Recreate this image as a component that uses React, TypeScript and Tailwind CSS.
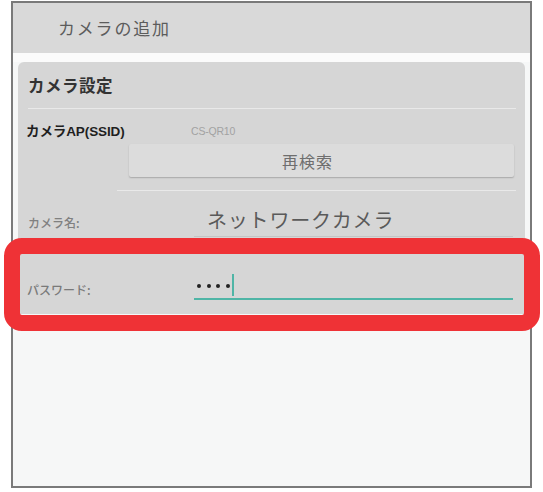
const jp = { fontFamily: '"Noto Sans CJK JP", "Noto Sans", sans-serif' }
const latin = { fontFamily: '"Liberation Sans", "Noto Sans CJK JP", sans-serif' }

export default function App() {
  return (
    <div className="relative w-[543px] h-[492px] bg-white" style={jp}>
      {/* Device frame */}
      <div className="ml-[11px] mt-[1px] w-[521px] h-[487px] border-2 border-[#7a7a7a] bg-[#f6f7f7] flex flex-col">
        {/* Action bar */}
        <div className="h-[50px] bg-[#d9d9d9] flex items-center pl-[45px]">
          <span className="text-[17px] tracking-[1.8px] text-[#5c5c5c]">カメラの追加</span>
        </div>
        <div className="h-[9px] bg-[#fbfbfb]" />

        {/* Settings card */}
        <div className="mx-[5px] h-[252px] bg-[#d6d6d6] rounded-t-[6px] flex flex-col">
          <div className="h-[46px] flex items-center pl-[10px]">
            <span className="text-[16.5px] font-bold tracking-[0.5px] text-[#333]">カメラ設定</span>
          </div>
          <div className="h-px ml-[10px] mr-[9px] bg-[#e9e9e9]" />

          <div className="mt-[13px] h-[20px] flex items-center pl-[8px]" style={latin}>
            <span className="w-[165px] text-[13.5px] font-bold text-[#1f1f1f] tracking-[-0.1px]">
              カメラAP(SSID)
            </span>
            <span className="text-[10.5px] text-[#a2a2a2] tracking-[-0.2px]">CS-QR10</span>
          </div>

          <div className="mt-[2px] ml-[111px] mr-[11px] h-[33px] bg-[#dcdcdc] rounded-[2px] shadow-[0_1px_1.5px_rgba(0,0,0,0.22)] flex items-center justify-center pr-[28px]">
            <span className="text-[16px] text-[#6e6e6e] tracking-[1px]">再検索</span>
          </div>

          <div className="mt-[13px] h-px ml-[99px] mr-[9px] bg-[#e9e9e9]" />

          {/* Camera name */}
          <div className="h-[46px] flex">
            <div className="w-[176px] pl-[10px] pt-[24px]">
              <span className="block text-[12px] leading-[16px] font-medium text-[#808080]">カメラ名:</span>
            </div>
            <div className="flex-1 mr-[12px] pt-[15px] border-b border-[#c4c4c4]">
              <span className="block pl-[13px] text-[20px] leading-[28px] tracking-[0.8px] text-[#5a5a5a]">
                ネットワークカメラ
              </span>
            </div>
          </div>

          {/* Password */}
          <div className="flex-1 flex">
            <div className="w-[176px] pl-[9px] pt-[44px]">
              <span className="block text-[12px] leading-[18px] font-medium text-[#7a7a7a]">パスワード:</span>
            </div>
            <div className="flex-1 mr-[12px] pt-[35px]">
              <div className="h-[28px] border-b-2 border-[#4fb5a6] flex items-center pl-[3px]">
                <div className="flex items-center gap-[5.5px] mt-[2px]">
                  <span className="w-[4px] h-[4px] rounded-full bg-[#222]" />
                  <span className="w-[4px] h-[4px] rounded-full bg-[#222]" />
                  <span className="w-[4px] h-[4px] rounded-full bg-[#222]" />
                  <span className="w-[4px] h-[4px] rounded-full bg-[#222]" />
                </div>
                <span className="ml-[2px] w-[2px] h-[22px] bg-[#4fb5a6]" />
              </div>
            </div>
          </div>
        </div>
      </div>

      {/* Red highlight */}
      <div className="absolute left-[4px] top-[237px] w-[536px] h-[93px] border-[16px] border-[#ef3236] rounded-[18px]" />
    </div>
  )
}
